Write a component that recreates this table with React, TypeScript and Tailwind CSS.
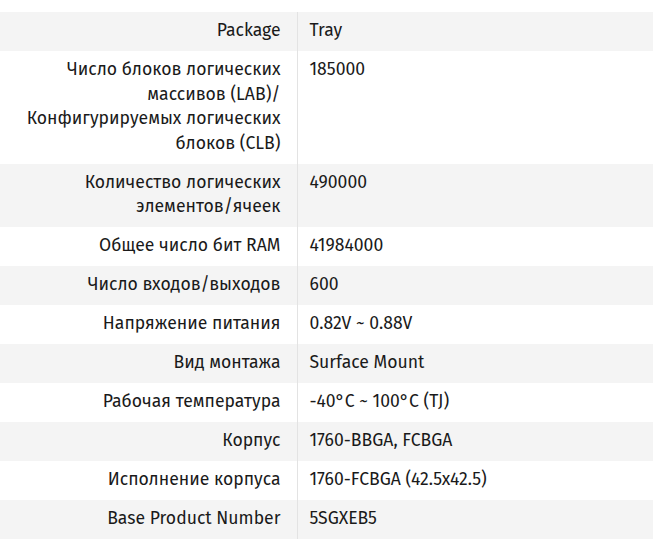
import React from "react";

const rows: [string, string][] = [
    ["Package", "Tray"],
    ["Число блоков логических массивов (LAB)/ Конфигурируемых логических блоков (CLB)", "185000"],
    ["Количество логических элементов/ячеек", "490000"],
    ["Общее число бит RAM", "41984000"],
    ["Число входов/выходов", "600"],
    ["Напряжение питания", "0.82V ~ 0.88V"],
    ["Вид монтажа", "Surface Mount"],
    ["Рабочая температура", "-40°C ~ 100°C (TJ)"],
    ["Корпус", "1760-BBGA, FCBGA"],
    ["Исполнение корпуса", "1760-FCBGA (42.5x42.5)"],
    ["Base Product Number", "5SGXEB5"],
];

export default function App() {
    return (
        <div className="min-h-screen bg-white pt-3 font-['Fira_Sans','Open_Sans',sans-serif] text-[17.6px] leading-[24.5px] text-[#1a1a1a]">
            <table className="w-full border-collapse">
                <tbody>
                    {rows.map(([label, value], i) => (
                        <tr key={label} className={i % 2 === 0 ? "bg-[#f4f4f4]" : "bg-white"}>
                            <td className="w-[297px] border-r border-[#e3e3e3] py-[7.25px] pl-6 pr-4 text-right align-top">
                                {label}
                            </td>
                            <td className="py-[7.25px] pl-3 pr-4 text-left align-top">{value}</td>
                        </tr>
                    ))}
                </tbody>
            </table>
        </div>
    );
}
